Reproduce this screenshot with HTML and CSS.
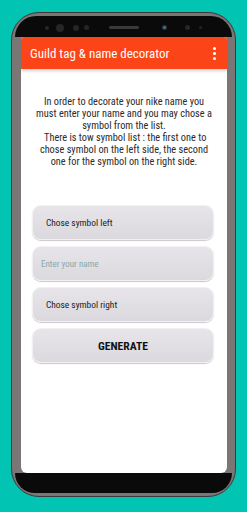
FILE: index.html
```html
<html lang="en">
<head>
  <meta charset="UTF-8">
  <meta name="viewport" content="width=device-width, initial-scale=1.0">
  <title>Guild tag &amp; name decorator</title>
  <link rel="stylesheet" href="styles.css">
</head>
<body>
  <div class="phone">
    <div class="bezel-top">
      <span class="sensor s1"></span>
      <span class="sensor s2"></span>
      <span class="sensor s3"></span>
      <span class="sensor s4"></span>
      <span class="speaker"></span>
      <span class="camera"></span>
      <span class="sensor s5"></span>
      <span class="sensor s6"></span>
    </div>

    <div class="screen">
      <div class="appbar">
        <span class="title">Guild tag &amp; name decorator</span>
        <span class="menu"><i></i><i></i><i></i></span>
      </div>

      <p class="intro">
        In order to decorate your nike name you<br>
        must enter your name and you may chose a<br>
        symbol from the list.<br>
        &nbsp;There is tow symbol list : the first one to<br>
        chose symbol on the left side, the second<br>
        one for the symbol on the right side.
      </p>

      <div class="form">
        <div class="field">Chose symbol left</div>
        <div class="field input">Enter your name</div>
        <div class="field">Chose symbol right</div>
        <div class="field generate">GENERATE</div>
      </div>
    </div>

    <div class="bezel-bottom"></div>
  </div>
</body>
</html>
```

FILE: styles.css
```css
body {
  margin: 0;
  height: 512px;
  background-color: #02c4b3;
  font-family: "Liberation Sans Narrow", "Roboto Condensed", Roboto, sans-serif;
  font-stretch: condensed;
  overflow: hidden;
}
.phone {
  width: 225px;
  height: 485px;
  margin: 12px 0 0 11px;
  box-sizing: border-box;
  padding: 3px;
  background-color: #7a7675;
  border: 1px solid #3b3939;
  border-radius: 28px;
  display: flex;
  flex-direction: column;
}
.bezel-top {
  height: 21px;
  padding-top: 2px;
  box-sizing: border-box;
  background-color: #0a0a0a;
  border-radius: 24px 24px 0 0;
  display: flex;
  align-items: center;
}
.sensor, .camera {
  border-radius: 50%;
  background-color: #262626;
  flex-shrink: 0;
}
.s1 { width: 4px; height: 4px; margin-left: 30px; }
.s2 { width: 8px; height: 8px; margin-left: 7px; }
.s3 { width: 6px; height: 6px; margin-left: 9px; }
.s4 { width: 5px; height: 5px; margin-left: 5px; }
.speaker {
  width: 30px;
  height: 3px;
  margin-left: 20px;
  border-radius: 2px;
  background-color: #3a3a3a;
}
.camera {
  width: 5px;
  height: 5px;
  margin-left: 23px;
  background: radial-gradient(circle, #4a86a8 0, #1c2a33 70%);
}
.s5 { width: 5px; height: 5px; margin-left: 18px; }
.s6 { width: 3px; height: 3px; margin-left: 9px; }

.screen {
  flex: 1;
  margin: 0 5px 0 6px;
  background-color: #fff;
  border-radius: 3px 3px 6px 6px;
  display: flex;
  flex-direction: column;
  overflow: hidden;
}
.appbar {
  height: 32px;
  flex-shrink: 0;
  padding: 0 11px 0 9px;
  background-color: #fb4418;
  box-shadow: 0 2px 3px rgba(0, 0, 0, 0.18);
  display: flex;
  align-items: center;
  justify-content: space-between;
}
.title {
  color: #fff;
  font-size: 13px;
}
.menu {
  display: flex;
  flex-direction: column;
  gap: 2px;
}
.menu i {
  width: 3px;
  height: 3px;
  border-radius: 50%;
  background-color: #fff;
}
.intro {
  margin: 27px 0 0;
  text-align: center;
  font-size: 10.3px;
  line-height: 12px;
  color: #2b2b2b;
}
.form {
  margin-top: 37px;
  padding: 0 13px 0 11px;
  display: flex;
  flex-direction: column;
  gap: 6px;
}
.field {
  height: 35px;
  box-sizing: border-box;
  padding-left: 13px;
  border: 1px solid #f1f0f3;
  border-radius: 9px;
  background: linear-gradient(#e7e5ea, #dbd9de);
  box-shadow: 0 1px 1px #cac8cd;
  display: flex;
  align-items: center;
  font-size: 9.4px;
  color: #222;
}
.input {
  padding-left: 8px;
  font-size: 9px;
  color: #86aaad;
}
.generate {
  padding-left: 0;
  justify-content: center;
  font-size: 11.6px;
  font-weight: bold;
  color: #111;
}
.bezel-bottom {
  height: 20px;
  flex-shrink: 0;
  background-color: #0a0a0a;
  border-radius: 0 0 24px 24px;
}
```
